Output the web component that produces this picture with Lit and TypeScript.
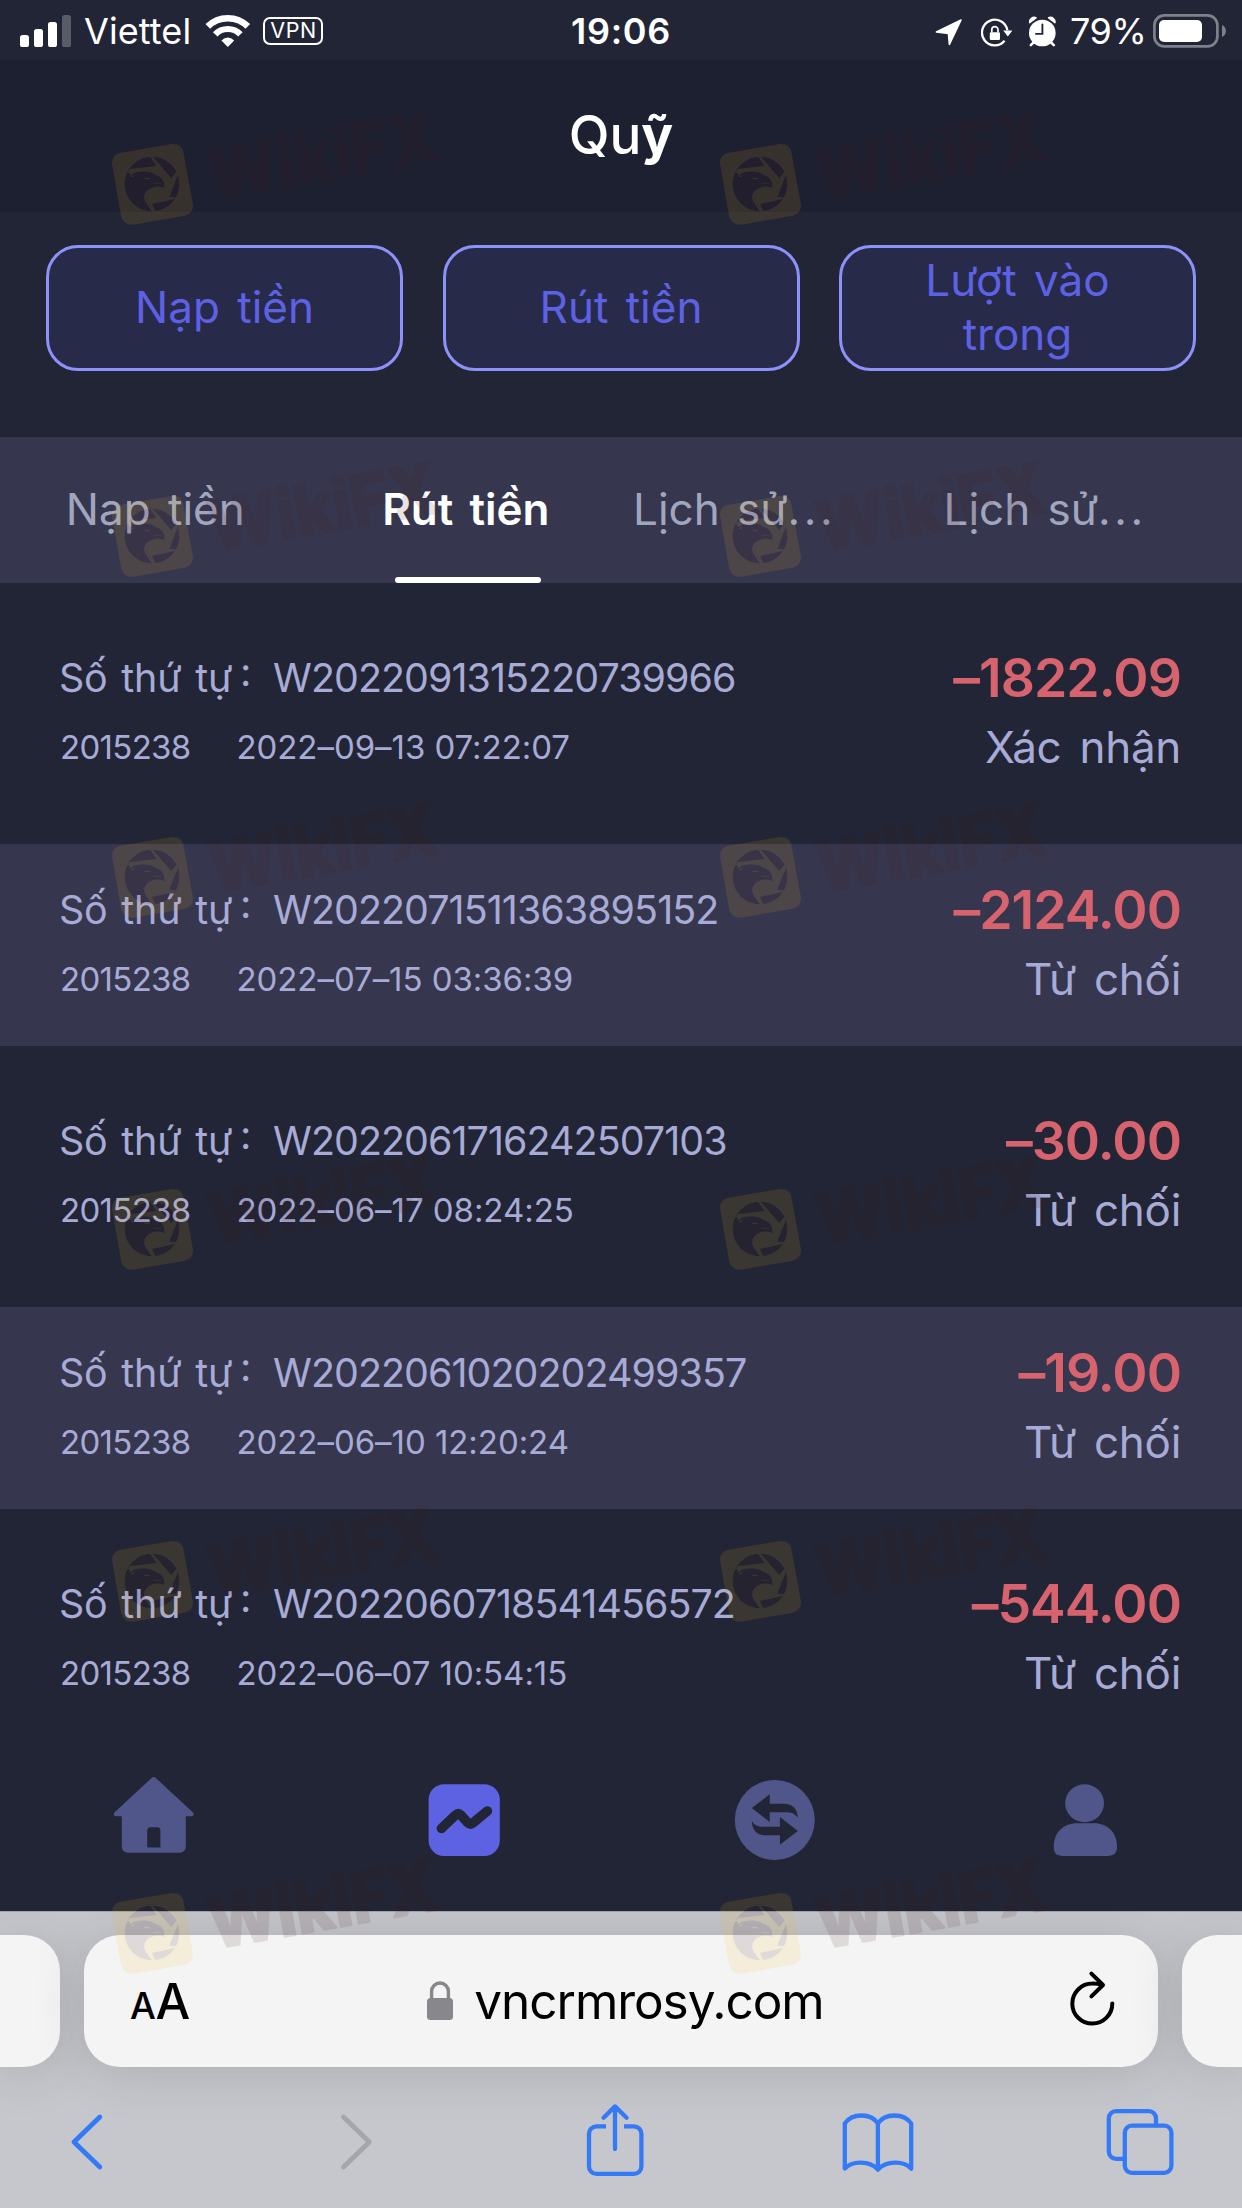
import { LitElement, html, css } from "lit";
import { customElement } from "lit/decorators.js";

interface Entry {
  order: string;
  account: string;
  time: string;
  amount: string;
  status: string;
}

const ENTRIES: Entry[] = [
  { order: "W2022091315220739966", account: "2015238", time: "2022–09–13 07:22:07", amount: "–1822.09", status: "Xác nhận" },
  { order: "W2022071511363895152", account: "2015238", time: "2022–07–15 03:36:39", amount: "–2124.00", status: "Từ chối" },
  { order: "W2022061716242507103", account: "2015238", time: "2022–06–17 08:24:25", amount: "–30.00", status: "Từ chối" },
  { order: "W2022061020202499357", account: "2015238", time: "2022–06–10 12:20:24", amount: "–19.00", status: "Từ chối" },
  { order: "W2022060718541456572", account: "2015238", time: "2022–06–07 10:54:15", amount: "–544.00", status: "Từ chối" },
];

@customElement("status-bar")
export class StatusBar extends LitElement {
  static styles = css`
    :host {
      display: grid;
      grid-template-columns: 1fr auto 1fr;
      align-items: center;
      height: 60px;
      background: #222536;
      color: #fff;
      font-size: 36px;
      line-height: 60px;
    }
    svg { display: block; flex: none; }
    .left { display: flex; align-items: center; padding-left: 20px; }
    .carrier { width: 121px; padding: 1px 0 0 12px; white-space: nowrap; letter-spacing: 0.1px; }
    .vpn {
      box-sizing: border-box;
      width: 60px;
      height: 28px;
      margin-left: 12px;
      border: 2.5px solid #fff;
      border-radius: 7px;
      font-size: 21.5px;
      line-height: 23px;
      text-align: center;
      letter-spacing: 0.6px;
      text-indent: 1px;
    }
    .time { padding-top: 1px; font-weight: 600; letter-spacing: 0.7px; }
    .right { display: flex; align-items: center; justify-content: flex-end; padding-right: 16px; }
    .lock { margin-left: 19px; }
    .alarm { margin-left: 16px; }
    .percent { width: 74px; margin: 1px 9px 0 13px; white-space: nowrap; letter-spacing: -0.4px; }
  `;

  render() {
    return html`
      <div class="left">
        <svg width="52" height="36" viewBox="0 0 52 36" fill="#fff">
          <rect x="0" y="22" width="9" height="12" rx="2.6" />
          <rect x="14" y="16" width="9" height="18" rx="2.6" />
          <rect x="28" y="9" width="9" height="25" rx="2.6" />
          <rect x="42" y="2" width="9" height="32" rx="2.6" opacity=".25" />
        </svg>
        <span class="carrier">Viettel</span>
        <svg width="46" height="36" viewBox="0 0 46 36" fill="none" stroke="#fff">
          <path d="M2.8 13.4A28.5 28.5 0 0 1 42.8 13.4" stroke-width="6.6" />
          <path d="M10.2 21.4A17.4 17.4 0 0 1 35.4 21.4" stroke-width="6.2" />
          <path d="M22.8 34L16.4 27.6Q22.8 21.4 29.2 27.6Z" fill="#fff" stroke="none" />
        </svg>
        <span class="vpn">VPN</span>
      </div>
      <span class="time">19:06</span>
      <div class="right">
        <svg width="27" height="36" viewBox="0 0 27 36" fill="#fff" stroke="#fff" stroke-width="1.6" stroke-linejoin="round">
          <path d="M1.4 19L26 7L14.4 31.4L13.4 20.4Z" />
        </svg>
        <svg class="lock" width="31" height="36" viewBox="0 0 31 36" fill="none" stroke="#fff" stroke-width="2.3">
          <path d="M26.4 17.4A12.8 12.8 0 1 0 23.6 27.8" />
          <path d="M22.2 17.4H31.4L26.8 23.6Z" fill="#fff" stroke="none" />
          <rect x="8.8" y="19.2" width="10.2" height="7.8" rx="1.2" fill="#fff" stroke="none" />
          <path d="M10.8 19.5V16.7a3.1 3.1 0 0 1 6.2 0V19.5" stroke-width="1.7" />
        </svg>
        <svg class="alarm" width="29" height="36" viewBox="0 0 29 36">
          <circle cx="14.3" cy="20" r="13.3" fill="#fff" />
          <path d="M1.6 9.6A4.6 4.6 0 0 1 8 4.8Z" fill="#fff" stroke="#fff" stroke-width="1.5" stroke-linejoin="round" />
          <path d="M27 9.6A4.6 4.6 0 0 0 20.6 4.8Z" fill="#fff" stroke="#fff" stroke-width="1.5" stroke-linejoin="round" />
          <path d="M5.6 29.4L2.8 32.2M23 29.4L25.8 32.2" stroke="#fff" stroke-width="2.6" stroke-linecap="round" />
          <path d="M14.4 11.4V20.9H8" fill="none" stroke="#222536" stroke-width="1.9" stroke-linecap="round" />
        </svg>
        <span class="percent">79%</span>
        <svg width="73" height="36" viewBox="0 0 73 36">
          <rect x="1.4" y="2.4" width="63" height="31" rx="10" fill="none" stroke="#fff" stroke-opacity=".42" stroke-width="2.7" />
          <rect x="6" y="7" width="43" height="22" rx="5" fill="#fff" />
          <path d="M69 12c5.2 2 5.2 10 0 12z" fill="#fff" fill-opacity=".42" />
        </svg>
      </div>
    `;
  }
}

@customElement("fund-row")
export class FundRow extends LitElement {
  static properties = { entry: { attribute: false } };
  declare entry: Entry;

  static styles = css`
    :host { display: flex; justify-content: space-between; padding: 32px 61px 0 59px; color: #a7abd6; white-space: nowrap; }
    .info, .result { display: flex; flex-direction: column; }
    .result { align-items: flex-end; }
    .order { display: flex; font-size: 39.4px; line-height: 68px; }
    .label { width: 179px; word-spacing: 3px; letter-spacing: -0.2px; }
    .colon { width: 35px; margin-top: -6px; text-indent: 2px; }
    .number { letter-spacing: -0.93px; }
    .meta { display: flex; gap: 46px; margin-top: 2px; padding-left: 1px; font-size: 33px; line-height: 66px; }
    .account { letter-spacing: -0.7px; }
    .time { letter-spacing: -0.05px; }
    .amount { font-size: 53.5px; line-height: 68px; font-weight: 600; letter-spacing: -0.95px; color: #d7636f; }
    .status { margin-top: 2px; font-size: 44px; line-height: 66px; letter-spacing: -0.3px; word-spacing: 6px; }
  `;

  render() {
    const e = this.entry;
    return html`
      <div class="info">
        <div class="order"><span class="label">Số thứ tự</span><span class="colon">:</span><span class="number">${e.order}</span></div>
        <div class="meta"><span class="account">${e.account}</span><span class="time">${e.time}</span></div>
      </div>
      <div class="result">
        <span class="amount">${e.amount}</span>
        <span class="status">${e.status}</span>
      </div>
    `;
  }
}

@customElement("bottom-nav")
export class BottomNav extends LitElement {
  static styles = css`
    :host { display: grid; grid-template-columns: repeat(4, 1fr); justify-items: center; height: 141px; background: #222535; fill: #50568a; }
    svg { display: block; }
    .active { fill: #5d62e3; }
  `;

  render() {
    return html`
      <svg width="100" height="100" viewBox="0 0 100 100">
        <path fill-rule="evenodd" d="M46.6 8Q48.7 6 50.8 8L88 42.4Q90 46 86.4 46.2H80.8V76Q80.8 82.7 74 82.7H23.6Q16.8 82.7 16.8 76V46.2H11Q7.6 46 9.4 42.4ZM42.2 77.5H55.4V60.6Q55.4 57.2 52 57.2H45.6Q42.2 57.2 42.2 60.6Z" />
      </svg>
      <svg class="active" width="100" height="100" viewBox="0 0 100 100">
        <rect x="12.6" y="14.2" width="71.2" height="71.8" rx="15.5" />
        <path d="M25.4 58.4L39.6 45Q42.3 42.6 44.8 45L51.6 52.6Q54.3 55.2 57.2 52.8L71.4 41" fill="none" stroke="#222535" stroke-width="9.6" stroke-linecap="round" stroke-linejoin="round" />
      </svg>
      <svg width="100" height="100" viewBox="0 0 100 100">
        <circle cx="48.8" cy="50" r="40" />
        <g fill="#222535">
          <path d="M25.8 38L43.7 24.3V33.7H58C66.5 33.7 71.8 39 71.8 48.3C69 43.5 66 42.3 60 42.3H43.7V52Z" />
          <path transform="rotate(180 48.8 49.5)" d="M25.8 38L43.7 24.3V33.7H58C66.5 33.7 71.8 39 71.8 48.3C69 43.5 66 42.3 60 42.3H43.7V52Z" />
        </g>
      </svg>
      <svg width="100" height="100" viewBox="0 0 100 100">
        <ellipse cx="47.6" cy="33.2" rx="19.4" ry="19" />
        <path d="M16.7 77C16.7 62 27 53.3 40 53.3H57C70 53.3 80 62 80 77C80 84 76 86 69 86H28C20 86 16.7 84 16.7 77Z" />
      </svg>
    `;
  }
}

@customElement("browser-bar")
export class BrowserBar extends LitElement {
  static styles = css`
    :host { display: block; box-sizing: border-box; height: 297px; padding-top: 24px; background: #c6c7cc; box-shadow: inset 0 1px 0 #a5a6ac; overflow: hidden; }
    svg { display: block; }
    .tabs { display: flex; gap: 24px; height: 132px; }
    .page, .side { background: #f4f4f4; box-shadow: 0 4px 50px rgba(40, 40, 50, 0.17); }
    .side { width: 60px; flex: none; }
    .prev { border-radius: 0 36px 36px 0; }
    .next { border-radius: 36px 0 0 36px; }
    .page {
      flex: 1;
      display: grid;
      grid-template-columns: 1fr auto 1fr;
      align-items: center;
      padding: 0 42px 0 46px;
      border-radius: 36px;
      color: #000;
    }
    .reader { padding-top: 2px; font-size: 49px; font-weight: 500; line-height: 130px; letter-spacing: -0.5px; }
    .small { font-size: 36.5px; }
    .site { display: flex; align-items: center; gap: 20px; padding-left: 4px; font-size: 49.5px; line-height: 130px; height: 132px; }
    .padlock { margin-bottom: 5px; }
    .url { height: 132px; margin-top: -2px; letter-spacing: -1.05px; }
    .reload { justify-self: end; margin-bottom: 9px; }
    .tools { display: grid; grid-template-columns: 172px 368px 150px 375px 149px; justify-items: center; padding-top: 33px; }
    .tools svg { fill: none; stroke: #3479f6; stroke-width: 4.3; stroke-linecap: round; stroke-linejoin: round; }
    .tools .off { stroke: #a5a6a9; }
  `;

  render() {
    return html`
      <div class="tabs">
        <div class="side prev"></div>
        <div class="page">
          <span class="reader"><span class="small">A</span>A</span>
          <span class="site">
            <svg class="padlock" width="28" height="40" viewBox="0 0 28 40">
              <rect x="1" y="17" width="26" height="22" rx="3.5" fill="#88888c" />
              <path d="M5.6 18V10.4a8.4 8.4 0 0 1 16.8 0V18" fill="none" stroke="#88888c" stroke-width="3.4" />
            </svg>
            <span class="url">vncrmrosy.com</span>
          </span>
          <svg class="reload" width="48" height="60" viewBox="0 0 48 60" fill="none" stroke="#000" stroke-width="4" stroke-linecap="round" stroke-linejoin="round">
            <path d="M44.3 34.5A20 20 0 1 1 24.3 14.6Q29 14.4 34.4 16M23.4 4.6L35 16L23.4 27.4" />
          </svg>
        </div>
        <div class="side next"></div>
      </div>
      <div class="tools">
        <svg width="80" height="80" viewBox="0 0 80 80"><path d="M53.8 17L28 42L53.8 67" stroke-width="4.8" /></svg>
        <svg class="off" width="80" height="80" viewBox="0 0 80 80"><path d="M27.5 17L53.3 42L27.5 67" stroke-width="4.8" /></svg>
        <svg width="80" height="80" viewBox="0 0 80 80">
          <path stroke-linecap="butt" d="M31 26.3H21.5a7.5 7.5 0 0 0-7.5 7.5V66.4a7.5 7.5 0 0 0 7.5 7.5H58.9a7.5 7.5 0 0 0 7.5-7.5V33.8a7.5 7.5 0 0 0-7.5-7.5H49" />
          <path d="M40 7V49M28.6 17.7L40 6.4L51.6 17.7" />
        </svg>
        <svg width="80" height="80" viewBox="0 0 80 80">
          <path d="M39.9 23.5C33 12.8 14 12.8 6.8 23.5V68.6C14 60.4 32 60.4 39.9 69.6C48 60.4 66 60.4 73.2 68.6V23.5C66 12.8 47 12.8 39.9 23.5V69.6" />
        </svg>
        <svg width="80" height="80" viewBox="0 0 80 80">
          <rect x="24.8" y="25.6" width="46.6" height="47.2" rx="7" />
          <path stroke-linecap="butt" d="M56 25V18.4a7.2 7.2 0 0 0-7.2-7.2H16a7.2 7.2 0 0 0-7.2 7.2V51.6a7.2 7.2 0 0 0 7.2 7.2H24.8" />
        </svg>
      </div>
    `;
  }
}

@customElement("wiki-mark")
export class WikiMark extends LitElement {
  static styles = css`
    :host { display: block; width: 360px; height: 150px; opacity: 0.115; }
    svg { display: block; overflow: visible; }
    .word { font: 800 213px Inter, "Liberation Sans", sans-serif; }
  `;

  render() {
    return html`
      <svg width="360" height="150" viewBox="0 0 1080 450">
        <path fill="#f4b91e" d="M62 188L216 162Q245 160 250 186L279 344Q280 370 254 377L100 404Q70 405 63 378L36 220Q35 193 62 188Z" />
        <circle cx="156" cy="282" r="82" fill="#48171a" />
        <path fill="#f4b91e" d="M84 244L90 237L170 228L150 200L158 200L214 264L230 244L234 254L208 320L228 322L222 328L156 342L166 364L156 366L136 336L120 300Z" />
        <path fill="#48171a" d="M192 295C196 276 186 258 164 254C160 244 120 240 100 250L92 258L108 256L78 274L94 272L74 292L90 286L76 306L96 292L86 330L102 300L100 344L114 316L122 358L128 332L136 358L156 364C140 350 132 336 132 322C134 302 150 292 166 290C178 288 186 290 192 295Z" />
        <path fill="#f4b91e" d="M130 263L152 264Q142 273 130 263ZM154 282Q172 275 188 281Q172 279 154 282Z" />
        <text class="word" transform="translate(340 331) rotate(-10)" textLength="694" lengthAdjust="spacingAndGlyphs" fill="#48171a" stroke="#48171a" stroke-width="6" stroke-linejoin="round">WikiFX</text>
      </svg>
    `;
  }
}

@customElement("app-root")
export class AppRoot extends LitElement {
  static styles = css`
    :host {
      display: block;
      position: relative;
      width: 1242px;
      height: 2208px;
      overflow: hidden;
      background: #222535;
      font-family: Inter, "Liberation Sans", "Noto Sans CJK SC", sans-serif;
    }
    .title { height: 152px; background: #1d2030; color: #fff; font-size: 53px; font-weight: 500; line-height: 150px; text-align: center; }
    .heavy { font-weight: 700; }
    .actions { display: grid; grid-template-columns: repeat(3, 357px); justify-content: space-between; height: 126px; padding: 33px 46px 66px; }
    .action {
      box-sizing: border-box;
      display: flex;
      align-items: center;
      justify-content: center;
      padding: 0 60px 3px;
      border: 3px solid #8d92fa;
      border-radius: 32px;
      background: #282a4a;
      color: #5d61e4;
      font-size: 44px;
      line-height: 54px;
      word-spacing: 5px;
      text-align: center;
    }
    .tabs { display: grid; grid-template-columns: repeat(4, 1fr); height: 146px; background: #36374e; color: #a1a6bf; font-size: 44px; line-height: 144px; word-spacing: 5px; white-space: nowrap; }
    .tab { display: flex; flex-direction: column; align-items: center; height: 146px; }
    .cut { display: block; padding-left: 12px; }
    .dots { letter-spacing: 3.5px; }
    .current { color: #fff; font-weight: 600; }
    .current::after { content: ""; width: 146px; height: 6px; margin: -4px 0 0 5px; border-radius: 3px; background: #fff; }
    .slot { height: 202px; padding: 29px 0 30px; }
    .slot.alt { padding: 0; background: #36374e; }
    .marks { position: absolute; inset: 0; pointer-events: none; }
    .mark { position: absolute; }
  `;

  render() {
    return html`
      <status-bar></status-bar>
      <div class="title">Qu<span class="heavy">ỹ</span></div>
      <div class="actions">
        <div class="action">Nạp tiền</div>
        <div class="action">Rút tiền</div>
        <div class="action">Lượt vào trong</div>
      </div>
      <div class="tabs">
        <div class="tab">Nạp tiền</div>
        <div class="tab current">Rút tiền</div>
        <div class="tab cut">Lịch sử<span class="dots">...</span></div>
        <div class="tab cut">Lịch sử<span class="dots">...</span></div>
      </div>
      <div class="list">
        ${ENTRIES.map((e, i) => html`<div class="slot ${i % 2 ? "alt" : ""}"><fund-row .entry=${e}></fund-row></div>`)}
      </div>
      <bottom-nav></bottom-nav>
      <browser-bar></browser-bar>
      <div class="marks">
        ${[90, 442, 783, 1135, 1487, 1839].map((y) =>
          [100, 708].map((x) => html`<wiki-mark class="mark" style="left:${x}px;top:${y}px"></wiki-mark>`)
        )}
      </div>
    `;
  }
}
